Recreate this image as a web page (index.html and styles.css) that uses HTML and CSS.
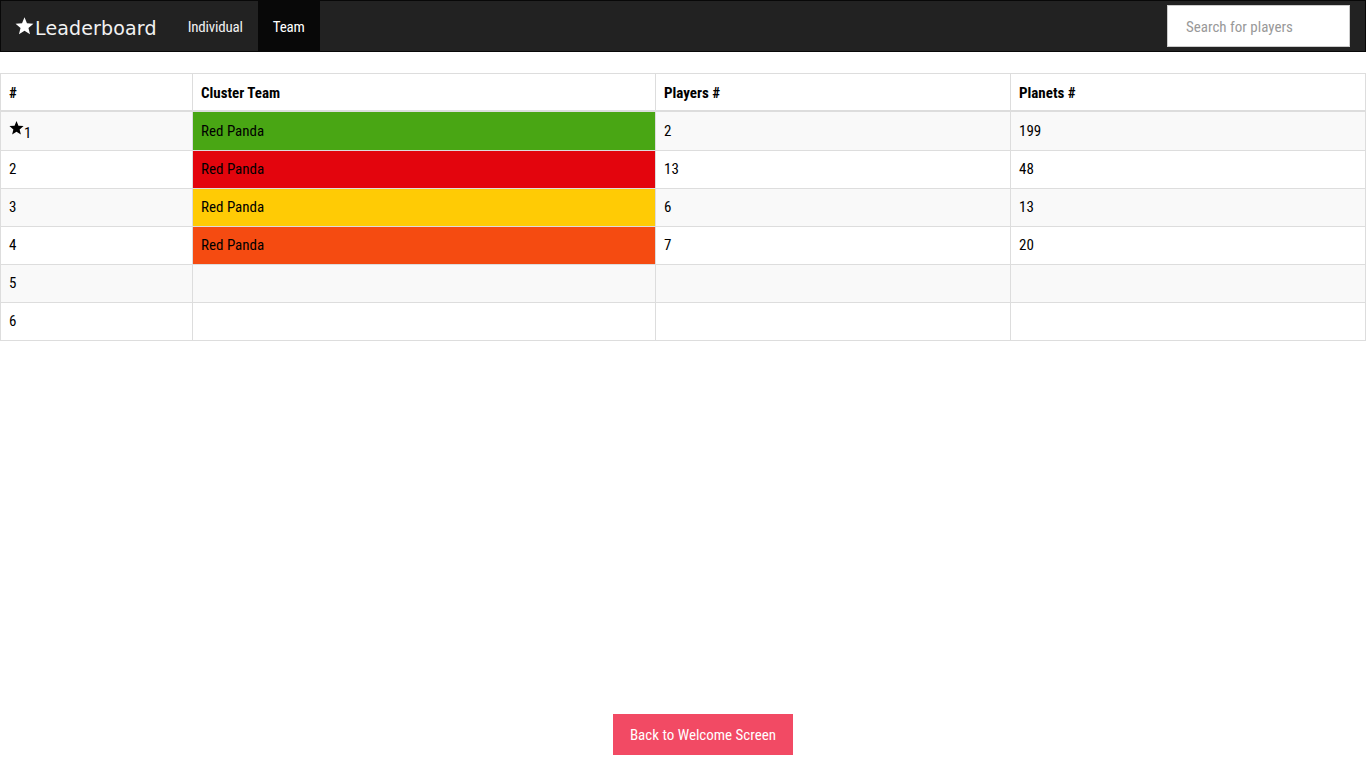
FILE: index.html
```html
<!DOCTYPE html>
<html>
<head>
<meta charset="utf-8">
<link rel="stylesheet" href="styles.css">
</head>
<body>
<div class="page">
  <nav class="navbar">
    <a class="brand"><svg class="brand-star" viewBox="0 0 24 24" width="19" height="19"><path d="M12 1.5l3.1 7.6 8.2.6-6.3 5.3 2 8-7-4.4-7 4.4 2-8L.7 9.7l8.2-.6z" fill="#fff"/></svg>Leaderboard</a>
    <ul class="nav">
      <li><a>Individual</a></li>
      <li class="active"><a>Team</a></li>
    </ul>
    <div class="search"><input type="text" placeholder="Search for players"></div>
  </nav>
  <main class="content">
    <table class="board">
      <colgroup><col class="c1"><col class="c2"><col class="c3"><col class="c4"></colgroup>
      <thead>
        <tr><th>#</th><th>Cluster Team</th><th>Players #</th><th>Planets #</th></tr>
      </thead>
      <tbody>
        <tr><td><svg class="rank-star" viewBox="0 0 24 24" width="15" height="15"><path d="M12 1.5l3.1 7.6 8.2.6-6.3 5.3 2 8-7-4.4-7 4.4 2-8L.7 9.7l8.2-.6z" fill="#000"/></svg><span class="rank1">1</span></td><td class="green">Red Panda</td><td>2</td><td>199</td></tr>
        <tr><td>2</td><td class="red">Red Panda</td><td>13</td><td>48</td></tr>
        <tr><td>3</td><td class="yellow">Red Panda</td><td>6</td><td>13</td></tr>
        <tr><td>4</td><td class="orange">Red Panda</td><td>7</td><td>20</td></tr>
        <tr><td>5</td><td></td><td></td><td></td></tr>
        <tr><td>6</td><td></td><td></td><td></td></tr>
      </tbody>
    </table>
  </main>
  <footer class="footer">
    <button class="back">Back to Welcome Screen</button>
  </footer>
</div>
</body>
</html>
```
FILE: styles.css
```css
html, body {
  margin: 0;
  padding: 0;
  background: #fff;
}
body {
  font-family: "Roboto Condensed", "Roboto", "Liberation Sans", sans-serif;
  font-size: 14px;
  color: #000;
}
.page {
  min-height: 100vh;
  display: flex;
  flex-direction: column;
}
.navbar {
  height: 50px;
  background: #222;
  border: 1px solid #080808;
  display: flex;
  align-items: stretch;
}
.brand {
  display: flex;
  align-items: center;
  padding: 3px 16px 0 14px;
  font-family: "DejaVu Sans", sans-serif;
  font-size: 19px;
  color: #f2f2f2;
  letter-spacing: 0.15px;
}
.brand-star {
  margin-right: 1px;
  margin-top: -5px;
}
.nav {
  list-style: none;
  margin: 0;
  padding: 0;
  display: flex;
}
.nav li {
  display: flex;
}
.nav a {
  display: flex;
  align-items: center;
  padding: 2px 15px 0;
  color: #f0f0f0;
  font-size: 15px;
  letter-spacing: -0.2px;
}
.nav li.active a {
  background: #080808;
  color: #fff;
}
.search {
  margin-left: auto;
  margin-right: 15px;
  display: flex;
  align-items: center;
}
.search input {
  width: 183px;
  height: 42px;
  box-sizing: border-box;
  border: 1px solid #ccc;
  padding: 2px 0 0 18px;
  font-family: inherit;
  font-size: 15px;
  color: #555;
  background: #fff;
  outline: none;
}
.search input::placeholder {
  color: #999;
}
.content {
  flex: 1;
  padding-top: 21px;
}
.board {
  width: 100%;
  border-collapse: collapse;
  table-layout: fixed;
  border: 1px solid #ddd;
}
.c1 { width: 192px; }
.c2 { width: 463px; }
.c3 { width: 355px; }
.board th, .board td {
  border: 1px solid #ddd;
  padding: 8px 8px;
  line-height: 21px;
  text-align: left;
  vertical-align: middle;
  font-size: 15px;
}
.board th {
  font-weight: bold;
  line-height: 20px;
  padding-top: 9px;
  padding-bottom: 7px;
  border-bottom: 2px solid #ddd;
}
.board tbody tr:nth-child(odd) td {
  background: #f9f9f9;
}
.board tbody tr td.green { background: #49a614; }
.board tbody tr td.red { background: #e3050d; }
.board tbody tr td.yellow { background: #ffcb05; }
.board tbody tr td.orange { background: #f54b11; }
.rank-star {
  vertical-align: 1px;
}
.rank1 {
  position: relative;
  top: 2px;
}
.footer {
  display: flex;
  justify-content: center;
  padding-bottom: 13px;
}
.back {
  margin-left: 40px;
  width: 180px;
  height: 41px;
  border: none;
  background: #f24a64;
  color: #fff;
  font-family: inherit;
  font-size: 15px;
  padding: 0;
}
```
